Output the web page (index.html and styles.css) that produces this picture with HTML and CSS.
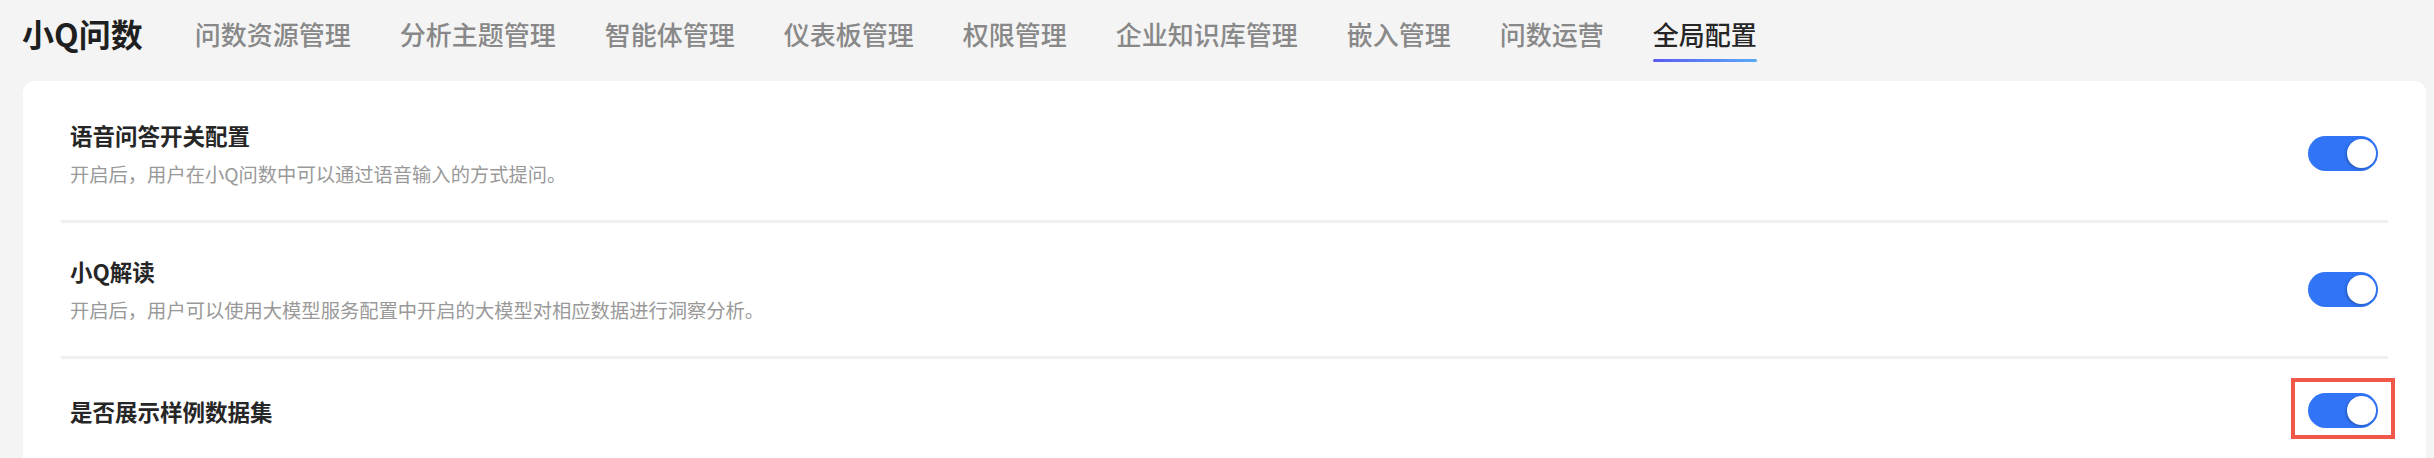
FILE: index.html
```html
<!DOCTYPE html>
<html lang="zh-CN">
<head>
  <meta charset="UTF-8" />
  <meta name="viewport" content="width=device-width, initial-scale=1.0"/>
  <title>小Q问数 - 全局配置</title>
  <link rel="stylesheet" href="styles.css">
</head>
<body>
  <header class="topbar">
    <div class="brand">小Q问数</div>
    <nav class="nav">
      <a class="nav-item">问数资源管理</a>
      <a class="nav-item">分析主题管理</a>
      <a class="nav-item">智能体管理</a>
      <a class="nav-item">仪表板管理</a>
      <a class="nav-item">权限管理</a>
      <a class="nav-item">企业知识库管理</a>
      <a class="nav-item">嵌入管理</a>
      <a class="nav-item">问数运营</a>
      <a class="nav-item active">全局配置</a>
    </nav>
  </header>

  <main class="card">
    <div class="setting-row">
      <div class="setting-text">
        <div class="setting-title">语音问答开关配置</div>
        <div class="setting-desc">开启后，用户在小Q问数中可以通过语音输入的方式提问。</div>
      </div>
      <span class="switch on"><span class="knob"></span></span>
    </div>

    <div class="setting-row">
      <div class="setting-text">
        <div class="setting-title">小Q解读</div>
        <div class="setting-desc">开启后，用户可以使用大模型服务配置中开启的大模型对相应数据进行洞察分析。</div>
      </div>
      <span class="switch on"><span class="knob"></span></span>
    </div>

    <div class="setting-row">
      <div class="setting-text">
        <div class="setting-title">是否展示样例数据集</div>
      </div>
      <span class="switch-wrap">
        <span class="switch on"><span class="knob"></span></span>
        <span class="highlight"></span>
      </span>
    </div>
  </main>
</body>
</html>
```

FILE: styles.css
```css
body {
  margin: 0;
  background: #f4f4f4;
  font-family: "Noto Sans CJK SC", "Noto Sans", sans-serif;
  color: #262626;
  overflow: hidden;
}
.topbar {
  display: flex;
  align-items: flex-start;
  height: 81px;
  padding: 15px 0 0 22px;
  box-sizing: border-box;
  gap: 52px;
}
.brand {
  font-size: 32px;
  font-weight: 700;
  line-height: 37px;
  color: #1f1f1f;
}
.nav {
  display: flex;
  gap: 49px;
}
.nav-item {
  font-size: 26px;
  font-weight: 500;
  line-height: 37px;
  color: #888;
  cursor: pointer;
}
.nav-item.active {
  color: #262626;
}
.nav-item.active::after {
  content: "";
  display: block;
  height: 3px;
  margin-top: 7px;
  border-radius: 2px;
  background: linear-gradient(to right, #5a5af2, #5aaaf6);
}
.card {
  margin: 0 8px 0 23px;
  padding: 6px 38px 0;
  background: #fff;
  border-radius: 12px;
  min-height: 400px;
}
.setting-row {
  display: flex;
  align-items: center;
  justify-content: space-between;
  padding: 32px 10px 32px 9px;
  border-bottom: 3px solid #f0f0f0;
}
.setting-row:last-child {
  border-bottom: none;
  padding-top: 34px;
}
.setting-title {
  font-size: 22.5px;
  font-weight: 700;
  line-height: 32px;
  color: #262626;
}
.setting-desc {
  margin-top: 9px;
  font-size: 19.3px;
  line-height: 28px;
  color: #999;
}
.switch {
  display: flex;
  justify-content: flex-end;
  align-items: center;
  width: 70px;
  height: 35px;
  padding: 0 2px;
  box-sizing: border-box;
  border-radius: 18px;
  background: #ccc;
}
.switch.on {
  background: #3174f6;
}
.knob {
  width: 29px;
  height: 29px;
  border-radius: 50%;
  background: #fff;
  box-shadow: -1px 1px 3px rgba(0, 0, 0, 0.25);
}
.switch-wrap {
  position: relative;
}
.highlight {
  position: absolute;
  left: -17px;
  top: -15px;
  width: 104px;
  height: 61px;
  box-sizing: border-box;
  border: 4px solid #f2584a;
}
```
